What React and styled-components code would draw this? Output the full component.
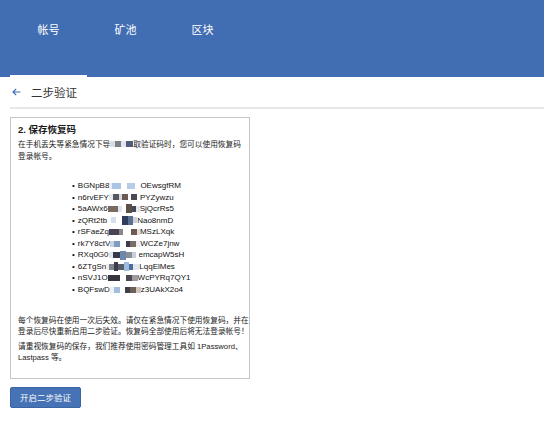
import React from 'react';
import styled, { createGlobalStyle } from 'styled-components';

const GlobalStyle = createGlobalStyle`
  html, body {
    margin: 0;
    padding: 0;
    background: #fff;
  }
  body {
    font-family: "Liberation Sans", "Noto Sans CJK SC", sans-serif;
    color: #222;
  }
`;

const Header = styled.nav`
  height: 77px;
  background-color: #416db2;
  display: flex;
  padding-left: 10px;
`;

const Tab = styled.div`
  width: 77px;
  box-sizing: border-box;
  padding-top: 23px;
  text-align: center;
  font-size: 11px;
  line-height: 14px;
  color: #fff;
  border-bottom: 2px solid ${p => (p.$active ? '#fff' : 'transparent')};
`;

const Body = styled.div`
  padding-left: 10px;
`;

const TitleRow = styled.div`
  height: 30px;
  display: flex;
  align-items: center;
  gap: 10px;
  padding-left: 2px;
  border-bottom: 2px solid #e8e8e8;
`;

const PageTitle = styled.span`
  font-size: 11.5px;
  color: #333;
  font-family: "Noto Sans CJK SC", sans-serif;
`;

const Card = styled.section`
  width: 240px;
  box-sizing: border-box;
  margin-top: 8px;
  border: 1px solid #c6c6c6;
  padding: 5px 7px 15px 7px;
`;

const CardTitle = styled.h3`
  margin: 0 0 2px;
  font-size: 9.5px;
  line-height: 14px;
  font-weight: bold;
  color: #1a1a1a;
`;

const Text = styled.p`
  margin: ${p => p.$mt || 0}px 0 0;
  font-size: 7.7px;
  line-height: ${p => p.$lh || 11}px;
  color: #222;
  white-space: nowrap;
`;

const CodeList = styled.ul`
  list-style: none;
  margin: 17px 0 0;
  padding: 0 0 0 54px;
`;

const Code = styled.li`
  font-size: 8px;
  line-height: 11.55px;
  height: 11.55px;
  color: #111;
  white-space: nowrap;
  display: flex;
  align-items: center;

  &::before {
    content: '•';
    margin-right: 3px;
  }
`;

const Mosaic = styled.span`
  display: inline-flex;
  align-items: center;
  height: 9px;
`;

const Block = styled.span`
  display: inline-block;
  width: ${p => p.$w}px;
  height: ${p => p.$h || 6}px;
  background: ${p => p.$c};
  filter: blur(0.3px);
`;

const Button = styled.button`
  margin-top: 8px;
  height: 21px;
  width: 71px;
  padding: 0;
  border: 1px solid #3b64a6;
  border-radius: 2px;
  background: #4672b6;
  color: #fff;
  font-family: "Noto Sans CJK SC", sans-serif;
  font-size: 8.5px;
  cursor: pointer;
`;

const codes = [
  ['BGNpB8', [[3, '#e6edf5'], [9, '#a9c4e4'], [6, '#fff'], [8, '#b7cce6'], [5, '#fff']], 'OEwsgfRM'],
  ['n6rvEFY', [[4, '#e9e9ec'], [6, '#55565f'], [3, '#d8d8dc'], [6, '#6a5a55'], [3, '#fff'], [6, '#4a4a56'], [3, '#fff']], 'PYZywzu'],
  ['5aAWx6', [[10, '#7b6a60'], [4, '#dfe6ef'], [4, '#fff'], [6, '#5c5048', 9], [4, '#3f4a5c'], [4, '#e7e7ea']], 'SjQcrRs5'],
  ['zQRt2tb', [[4, '#fff'], [5, '#d6e0ec'], [6, '#fff'], [6, '#2f3e5e', 9], [5, '#5b6f8f', 9], [4, '#c8d2de']], 'Nao8nmD'],
  ['rSFaeZq', [[10, '#4a4350'], [4, '#8b8590'], [8, '#fff'], [6, '#6e5a52'], [3, '#e5e0de']], 'MSzLXqk'],
  ['rk7Y8ctV', [[4, '#c4d4e6'], [6, '#7e9cc2'], [6, '#fff'], [4, '#3e3e48'], [6, '#7a6c66'], [4, '#eee']], 'WCZe7jnw'],
  ['RXq0G0', [[4, '#dfe4ea'], [7, '#34384a'], [6, '#6e87ad', 9], [6, '#8a8f9a'], [4, '#c6cfdb'], [3, '#fff']], 'emcapW5sH'],
  ['6ZTgSn', [[3, '#eee'], [5, '#7f8690'], [4, '#3c3d48', 9], [6, '#5a5e6a'], [5, '#9fbbe0', 9], [4, '#4d6a98'], [6, '#e0e6ee']], 'LqqElMes'],
  ['nSVJ1O', [[12, '#363640'], [6, '#fff'], [6, '#4a4852'], [6, '#a09aa0']], 'WcPYRq7QY1'],
  ['BQFswD', [[4, '#eef2f7'], [6, '#a3bddd'], [5, '#fff'], [5, '#3f3f4a'], [6, '#6f5e56'], [5, '#cfc6c0']], 'z3UAkX2o4'],
];

const BackArrow = () => (
  <svg width="9" height="8" viewBox="0 0 9 8" fill="none" stroke="#416db2" strokeWidth="1.2">
    <path d="M8.5 4H1M4.2 0.8L1 4l3.2 3.2" />
  </svg>
);

export default function App() {
  return (
    <>
      <GlobalStyle />
      <Header>
        <Tab $active>帐号</Tab>
        <Tab>矿池</Tab>
        <Tab>区块</Tab>
      </Header>
      <Body>
        <TitleRow>
          <BackArrow />
          <PageTitle>二步验证</PageTitle>
        </TitleRow>
        <Card>
          <CardTitle>2. 保存恢复码</CardTitle>
          <Text $lh={12}>
            在手机丢失等紧急情况下导
            <Mosaic>
              <Block $w={5} $c="#d9dde4" />
              <Block $w={6} $c="#7d7f8a" />
              <Block $w={5} $c="#e3e5ea" />
              <Block $w={7} $c="#4f5e7e" />
            </Mosaic>
            取验证码时，您可以使用恢复码
          </Text>
          <Text $lh={12}>登录帐号。</Text>
          <CodeList>
            {codes.map(([pre, blocks, post]) => (
              <Code key={pre}>
                {pre}
                <Mosaic>
                  {blocks.map(([w, c, h], i) => (
                    <Block key={i} $w={w} $c={c} $h={h} />
                  ))}
                </Mosaic>
                {post}
              </Code>
            ))}
          </CodeList>
          <Text $mt={20}>每个恢复码在使用一次后失效。请仅在紧急情况下使用恢复码，并在</Text>
          <Text>登录后尽快重新启用二步验证。恢复码全部使用后将无法登录帐号！</Text>
          <Text $mt={3.5}>请重视恢复码的保存，我们推荐使用密码管理工具如 1Password、</Text>
          <Text>Lastpass 等。</Text>
        </Card>
        <Button>开启二步验证</Button>
      </Body>
    </>
  );
}
